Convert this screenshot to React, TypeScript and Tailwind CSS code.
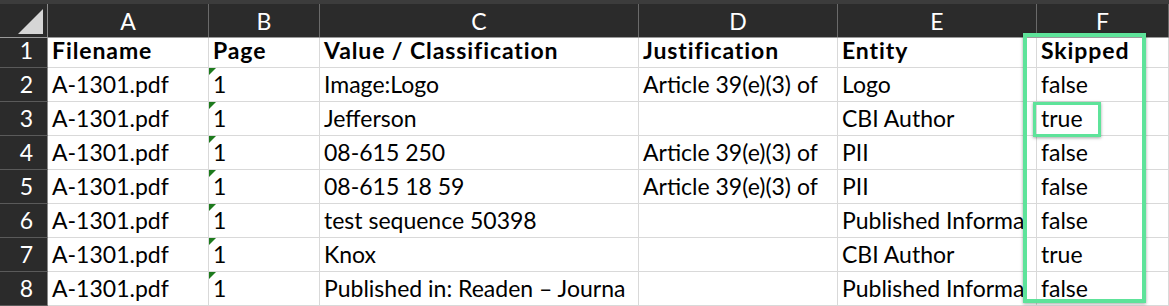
import React from 'react';

const cols = ['A', 'B', 'C', 'D', 'E', 'F'];
const widths = ['w-[161px]', 'w-[111px]', 'w-[319px]', 'w-[199px]', 'w-[199px]', 'flex-1'];

// cells are cut where the column ends, as in the sheet
const rows: string[][] = [
  ['Filename', 'Page', 'Value / Classification', 'Justification', 'Entity', 'Skipped'],
  ['A-1301.pdf', '1', 'Image:Logo', 'Article 39(e)(3) of', 'Logo', 'false'],
  ['A-1301.pdf', '1', 'Jefferson', '', 'CBI Author', 'true'],
  ['A-1301.pdf', '1', '08-615 250', 'Article 39(e)(3) of', 'PII', 'false'],
  ['A-1301.pdf', '1', '08-615 18 59', 'Article 39(e)(3) of', 'PII', 'false'],
  ['A-1301.pdf', '1', 'test sequence 50398', '', 'Published Informa', 'false'],
  ['A-1301.pdf', '1', 'Knox', '', 'CBI Author', 'true'],
  ['A-1301.pdf', '1', 'Published in: Readen – Journa', '', 'Published Informa', 'false'],
  ['', '', '', '', '', ''],
];

const Cell: React.FC<{ text: string; col: number; bold: boolean; marker: boolean }> = ({ text, col, bold, marker }) => (
  <div
    className={`${widths[col]} shrink-0 min-w-0 relative flex items-end whitespace-nowrap border-r border-[#d9d9d9] pl-[4px] pb-[5px] ${bold ? 'font-bold tracking-[0.9px] overflow-visible' : 'overflow-hidden'}`}
  >
    {marker && (
      <div className="absolute left-0 top-0 w-0 h-0 border-t-[7px] border-t-[#1d7a1d] border-r-[7px] border-r-transparent" />
    )}
    <span className="leading-none">{text}</span>
  </div>
);

export default function App() {
  return (
    <div className="w-[1169px] h-[306px] overflow-hidden bg-white text-black relative" style={{ fontFamily: 'Lato, "Open Sans", sans-serif' }}>
      <div className="h-[4px] bg-[#3c3c3c]" />
      {/* column header row */}
      <div className="flex h-[34px] bg-[#2b2b2b] text-white text-[23px] border-b border-[#9a9a9a]">
        <div className="w-[48px] shrink-0 relative border-r border-[#8a8a8a]">
          <div className="absolute right-[4px] bottom-[3px] w-0 h-0 border-b-[25px] border-b-[#d6d6d6] border-l-[25px] border-l-transparent" />
        </div>
        {cols.map((c, i) => (
          <div key={c} className={`${widths[i]} shrink-0 flex items-center justify-center border-r border-[#6a6a6a] pt-[2px]`}>
            {c}
          </div>
        ))}
      </div>
      {rows.map((r, ri) => (
        <div key={ri} className={`flex ${ri === 0 ? 'h-[30px]' : 'h-[34px]'} border-b border-[#d9d9d9] text-[23px]`}>
          <div className="w-[48px] shrink-0 bg-[#2b2b2b] text-white flex items-end pb-[5px] justify-end pr-[14px] border-r border-[#8a8a8a] border-b border-b-[#5a5a5a] -mb-px leading-none">
            {ri < 8 ? ri + 1 : ''}
          </div>
          {r.map((t, ci) => (
            <Cell key={ci} text={t} col={ci} bold={ri === 0} marker={ri > 0 && ci === 1} />
          ))}
        </div>
      ))}
      {/* highlight boxes */}
      <div className="absolute left-[1023px] top-[33px] w-[123px] h-[270px] border-[4px] border-[#5ee39a] shadow-[0_1px_3px_rgba(0,0,0,0.35)] pointer-events-none" />
      <div className="absolute left-[1033px] top-[102px] w-[68px] h-[35px] border-[3px] border-[#5ee39a] shadow-[0_1px_3px_rgba(0,0,0,0.35)] pointer-events-none" />
    </div>
  );
}
